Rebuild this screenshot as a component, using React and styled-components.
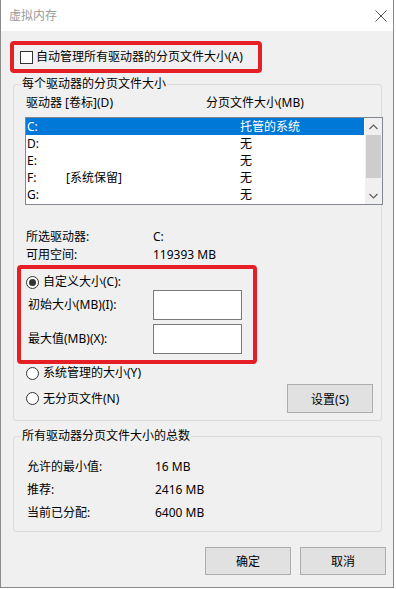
import React from "react";
import styled, { createGlobalStyle } from "styled-components";

const Global = createGlobalStyle`
  * { box-sizing: border-box; }
  html, body { margin: 0; padding: 0; background: #ffffff; }
  body {
    font-family: "Noto Sans", "Noto Sans CJK SC", sans-serif;
    font-size: 12px;
    color: #000;
  }
`;

const Window = styled.div`
  width: 394px;
  height: 588px;
  border: 1px solid #8a8a8a;
  border-top: none;
  display: flex;
  flex-direction: column;
  background: #f0f0f0;
`;

const TitleBar = styled.div`
  height: 31px;
  background: #fff;
  display: flex;
  align-items: center;
  justify-content: space-between;
  padding: 0 6px 0 8px;
  flex-shrink: 0;
`;

const Title = styled.span`
  color: #9a9a9a;
  font-size: 12px;
  line-height: 16px;
`;

const Body = styled.div`
  flex: 1;
  display: flex;
  flex-direction: column;
  align-items: flex-start;
`;

const Highlight = styled.div`
  border: 4px solid #e61f27;
  border-radius: 4px;
  width: ${(p) => p.$w}px;
  margin: ${(p) => p.$m};
  padding: ${(p) => p.$pad};
  display: flex;
  flex-direction: column;
`;

const CheckRow = styled.label`
  display: flex;
  align-items: center;
  gap: 3px;
  height: 24px;
  line-height: 16px;
`;

const CheckBox = styled.span`
  width: 13px;
  height: 13px;
  border: 1px solid #333;
  background: #fff;
  display: inline-block;
  flex-shrink: 0;
`;

const Group = styled.fieldset`
  margin: ${(p) => p.$m};
  padding: 0 0 ${(p) => p.$pb}px 0;
  width: 369px;
  min-width: 0;
  border: 1px solid #dcdcdc;
  border-radius: 3px;
  display: flex;
  flex-direction: column;
  align-items: flex-start;
`;

const Legend = styled.legend`
  margin-left: 7px;
  padding: 0 1px;
  line-height: 14px;
  font-size: 12px;
`;

const HeaderRow = styled.div`
  display: grid;
  grid-template-columns: 180px auto;
  padding-left: 12px;
  margin-top: 4px;
  line-height: 16px;
`;

const List = styled.div`
  margin: 6px 0 0 11px;
  width: 358px;
  height: 88px;
  border: 1px solid #828790;
  background: #fff;
  display: flex;
`;

const Rows = styled.div`
  flex: 1;
  overflow: hidden;
`;

const ListRow = styled.div`
  height: 17px;
  line-height: 17px;
  display: grid;
  grid-template-columns: 39px 174px auto;
  padding-left: 1px;
  margin-right: 1px;
  background: ${(p) => (p.$sel ? "#0078d7" : "transparent")};
  color: ${(p) => (p.$sel ? "#fff" : "#000")};
`;

const ScrollBar = styled.div`
  width: 17px;
  background: #f0f0f0;
  display: flex;
  flex-direction: column;
  align-items: center;
`;

const Arrow = styled.div`
  height: 17px;
  width: 17px;
  display: flex;
  align-items: center;
  justify-content: center;
`;

const Thumb = styled.div`
  width: 15px;
  height: 43px;
  background: #cdcdcd;
`;

const InfoGrid = styled.div`
  display: grid;
  grid-template-columns: ${(p) => p.$col}px auto;
  grid-auto-rows: ${(p) => p.$rh}px;
  align-items: center;
  padding-left: ${(p) => p.$pl}px;
  margin-top: ${(p) => p.$mt}px;
  line-height: 16px;
`;

const RadioRow = styled.label`
  display: flex;
  align-items: center;
  gap: 4px;
  height: 16px;
  line-height: 16px;
  padding-left: ${(p) => p.$pl}px;
`;

const Radio = styled.span`
  width: 13px;
  height: 13px;
  border-radius: 50%;
  border: 1px solid #333;
  background: #fff;
  display: inline-flex;
  align-items: center;
  justify-content: center;
  flex-shrink: 0;
  &::after {
    content: "";
    width: 7px;
    height: 7px;
    border-radius: 50%;
    background: ${(p) => (p.$on ? "#333" : "transparent")};
  }
`;

const FieldRow = styled.div`
  display: grid;
  grid-template-columns: 125px 89px;
  align-items: center;
  padding-left: 7px;
  margin-top: ${(p) => p.$mt}px;
  line-height: 16px;
`;

const Input = styled.div`
  height: 30px;
  border: 1px solid #7a7a7a;
  background: #fff;
`;

const BottomRow = styled.div`
  width: 100%;
  display: flex;
  align-items: center;
  justify-content: space-between;
  margin-top: 3px;
  padding-right: 8px;
`;

const Button = styled.button`
  width: 86px;
  height: ${(p) => p.$h}px;
  background: #e1e1e1;
  border: 1px solid #adadad;
  font-family: inherit;
  font-size: 12px;
  color: #000;
  padding: 0;
`;

const Footer = styled.div`
  width: 100%;
  display: flex;
  justify-content: flex-end;
  gap: 9px;
  padding-right: 7px;
  margin-top: 15px;
`;

const drives = [
  ["C:", "", "托管的系统"],
  ["D:", "", "无"],
  ["E:", "", "无"],
  ["F:", "[系统保留]", "无"],
  ["G:", "", "无"],
];

export default function App() {
  return (
    <>
      <Global />
      <Window>
        <TitleBar>
          <Title>虚拟内存</Title>
          <svg width="12" height="12" viewBox="0 0 12 12">
            <path d="M0.5 0.5 L11.5 11.5 M11.5 0.5 L0.5 11.5" stroke="#555" strokeWidth="1" fill="none" />
          </svg>
        </TitleBar>
        <Body>
          <Highlight $w={252} $m="10px 0 0 9px" $pad="0 0 0 6px">
            <CheckRow>
              <CheckBox />
              自动管理所有驱动器的分页文件大小(A)
            </CheckRow>
          </Highlight>

          <Group $m="4px 0 0 12px" $pb={7}>
            <Legend>每个驱动器的分页文件大小</Legend>
            <HeaderRow>
              <span>驱动器 [卷标](D)</span>
              <span>分页文件大小(MB)</span>
            </HeaderRow>
            <List>
              <Rows>
                {drives.map(([d, l, s], i) => (
                  <ListRow key={d} $sel={i === 0}>
                    <span>{d}</span>
                    <span>{l}</span>
                    <span>{s}</span>
                  </ListRow>
                ))}
              </Rows>
              <ScrollBar>
                <Arrow>
                  <svg width="9" height="6" viewBox="0 0 9 6">
                    <path d="M0.5 5 L4.5 1 L8.5 5" stroke="#606060" strokeWidth="1.2" fill="none" />
                  </svg>
                </Arrow>
                <Thumb />
                <div style={{ flex: 1 }} />
                <Arrow>
                  <svg width="9" height="6" viewBox="0 0 9 6">
                    <path d="M0.5 1 L4.5 5 L8.5 1" stroke="#606060" strokeWidth="1.2" fill="none" />
                  </svg>
                </Arrow>
              </ScrollBar>
            </List>

            <InfoGrid $col={127} $rh={18} $pl={12} $mt={23}>
              <span>所选驱动器:</span>
              <span>C:</span>
              <span>可用空间:</span>
              <span>119393 MB</span>
            </InfoGrid>

            <Highlight $w={240} $m="1px 0 0 3px" $pad="5px 0 6px 0">
              <RadioRow $pl={5}>
                <Radio $on />
                自定义大小(C):
              </RadioRow>
              <FieldRow $mt={0}>
                <span>初始大小(MB)(I):</span>
                <Input />
              </FieldRow>
              <FieldRow $mt={4}>
                <span>最大值(MB)(X):</span>
                <Input />
              </FieldRow>
            </Highlight>

            <RadioRow $pl={12} style={{ marginTop: 1 }}>
              <Radio />
              系统管理的大小(Y)
            </RadioRow>
            <BottomRow>
              <RadioRow $pl={12}>
                <Radio />
                无分页文件(N)
              </RadioRow>
              <Button $h={29}>设置(S)</Button>
            </BottomRow>
          </Group>

          <Group $m="8px 0 0 12px" $pb={7}>
            <Legend>所有驱动器分页文件大小的总数</Legend>
            <InfoGrid $col={128} $rh={23} $pl={13} $mt={12}>
              <span>允许的最小值:</span>
              <span>16 MB</span>
              <span>推荐:</span>
              <span>2416 MB</span>
              <span>当前已分配:</span>
              <span>6400 MB</span>
            </InfoGrid>
          </Group>

          <Footer>
            <Button $h={28}>确定</Button>
            <Button $h={28}>取消</Button>
          </Footer>
        </Body>
      </Window>
    </>
  );
}
